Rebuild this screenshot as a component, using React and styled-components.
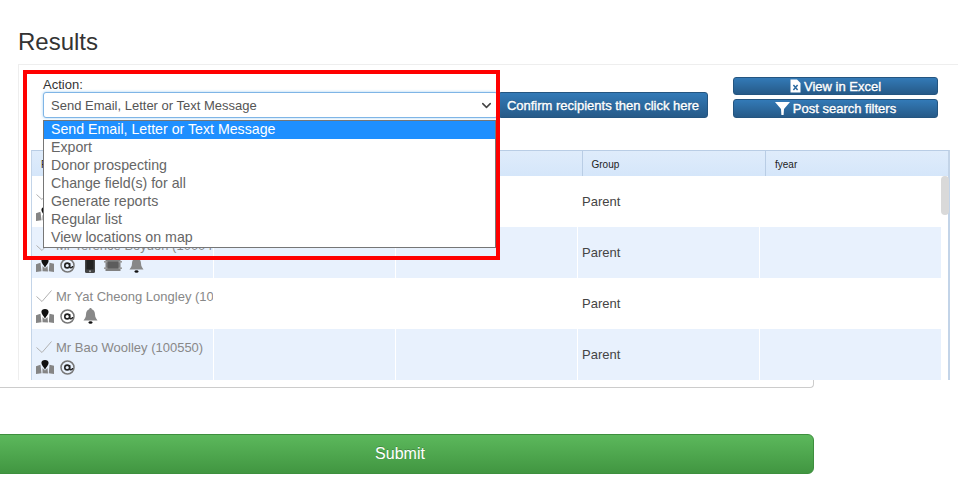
import React from 'react';
import styled, { createGlobalStyle } from 'styled-components';
import { ChevronDown } from 'lucide-react';

const Global = createGlobalStyle`
  html, body { margin: 0; padding: 0; background: #fff; overflow: hidden; }
  body { font-family: "Liberation Sans", Arial, sans-serif; color: #333; }
  * { box-sizing: border-box; }
`;

const Page = styled.div`
  position: relative;
  width: 958px;
  height: 492px;
  overflow: hidden;
`;
const Heading = styled.h1`
  margin: 0;
  height: 64px;
  padding: 28px 0 0 18px;
  font-size: 24px;
  line-height: 27px;
  font-weight: 400;
  color: #333;
`;
const Card = styled.div`
  width: 814px;
  padding-bottom: 7px;
  border-right: 1px solid #ccc;
  border-bottom: 1px solid #ccc;
  border-bottom-right-radius: 4px;
`;
const Panel = styled.section`
  width: 960px;
  height: 316px;
  margin-left: 18px;
  padding-left: 12px;
  background: #fff;
  border-top: 1px solid #eee;
  border-left: 1px solid #eee;
`;
const ActionBar = styled.div`
  display: flex;
  align-items: flex-start;
  height: 85px;
  padding-left: 12px;
`;
const ActionColumn = styled.div`
  width: 455px;
  padding-top: 12px;
`;
const Label = styled.div`
  font-size: 13px;
  line-height: 15px;
  color: #333;
`;
const SelectWrap = styled.div`
  position: relative;
`;
const SelectBox = styled.div`
  display: flex;
  align-items: center;
  justify-content: space-between;
  height: 26px;
  padding: 0 3px 0 7px;
  background: #fff;
  border: 1px solid #7fb5e6;
  border-radius: 3px;
  box-shadow: 0 0 3px rgba(102, 175, 233, .6);
  font-size: 13px;
  color: #555;
`;
const Dropdown = styled.ul`
  position: absolute;
  z-index: 3;
  top: 28px;
  left: 0;
  width: 453px;
  height: 128px;
  margin: 0;
  padding: 0;
  list-style: none;
  background: #fff;
  border: 1px solid #767676;
`;
const Option = styled.li`
  height: 18px;
  padding-left: 7px;
  font-size: 14.2px;
  line-height: 17px;
  color: ${p => (p.$active ? '#fff' : '#666')};
  background: ${p => (p.$active ? '#1e8fff' : 'transparent')};
`;
const BlueButton = styled.button`
  display: flex;
  align-items: center;
  justify-content: center;
  gap: 3px;
  padding: 0;
  width: ${p => p.$w}px;
  height: ${p => p.$h}px;
  font-family: inherit;
  font-size: 13px;
  font-weight: 400;
  white-space: nowrap;
  color: #fff;
  -webkit-text-stroke: 0.35px #fff;
  text-shadow: 0 -1px 0 rgba(0, 0, 0, .2);
  background: linear-gradient(to bottom, #337ab7, #265a88);
  border: 1px solid #245580;
  border-radius: 3px;
`;
const ConfirmSlot = styled.div`
  padding-top: 27px;
`;
const SideButtons = styled.div`
  display: flex;
  flex-direction: column;
  gap: 4px;
  margin-left: 25px;
  padding-top: 12px;
`;
const Table = styled.div`
  width: 919px;
  height: 230px;
  border-left: 1px solid #c3d4e8;
  border-right: 2px solid #c3d4e8;
  border-top: 1px solid #b9cde5;
`;
const HeaderRow = styled.div`
  display: grid;
  grid-template-columns: repeat(5, 183.5px);
  height: 25px;
  background: linear-gradient(to bottom, #dfecfb, #d5e6fa);
`;
const HeaderCell = styled.div`
  padding: 8px 0 0 9px;
  font-size: 10px;
  line-height: 12px;
  color: #222;
  border-right: 1px solid #b9cde5;
  &:last-child { border-right: 0; }
`;
const Body = styled.div`
  display: flex;
  height: 204px;
`;
const Rows = styled.div`
  width: 909px;
`;
const Row = styled.div`
  display: grid;
  grid-template-columns: repeat(5, 181px);
  column-gap: 1px;
  height: 51px;
`;
const Cell = styled.div`
  min-width: 0;
  background: ${p => (p.$alt ? '#e8f1fd' : '#fff')};
`;
const ValueCell = styled(Cell)`
  padding-left: 4px;
  font-size: 13px;
  line-height: 51px;
  color: #444;
`;
const PersonCell = styled(Cell)`
  padding: 10px 0 0 4px;
  overflow: hidden;
`;
const NameLine = styled.div`
  display: flex;
  align-items: center;
  gap: 4px;
  height: 16px;
  font-size: 13px;
  color: #888;
  white-space: nowrap;
`;
const IconLine = styled.div`
  display: flex;
  align-items: center;
  height: 18px;
  margin-top: 3px;
`;
const IconSlot = styled.span`
  display: flex;
  flex: none;
  margin-left: ${p => p.$before || 0}px;
`;
const TickMark = styled.svg`
  flex: none;
`;
const ScrollTrack = styled.div`
  width: 9px;
`;
const ScrollThumb = styled.div`
  width: 8px;
  height: 39px;
  background: #d9d9d9;
  border-radius: 4px;
`;
const SubmitRow = styled.div`
  margin: 46px 0 0 -14px;
`;
const SubmitButton = styled.button`
  display: block;
  width: 828px;
  height: 40px;
  padding: 0;
  font-family: inherit;
  font-size: 16px;
  color: #fff;
  background: linear-gradient(to bottom, #5cb85c, #419641);
  border: 1px solid #3e8f3e;
  border-radius: 6px;
  text-shadow: 0 -1px 0 rgba(0, 0, 0, .2);
`;
const Highlight = styled.div`
  position: absolute;
  z-index: 4;
  left: 23px;
  top: 70px;
  width: 477px;
  height: 190px;
  border: 4px solid #f00;
  pointer-events: none;
`;

const Tick = () => (
  <TickMark width="16" height="12" viewBox="0 0 16 12" fill="none" stroke="#b0b0b0" strokeWidth="1">
    <path d="M0.5 6.5 L6 11.5 L15.5 0.5" />
  </TickMark>
);
const MapPin = () => (
  <svg width="18" height="14" viewBox="0 0 18 16" preserveAspectRatio="none">
    <path d="M0 7 L4.5 5.5 L5.5 15 L0 16 Z M6.5 9 L9 12 L11.5 9 L12 15.5 L6.5 15 Z M13.5 5.5 L18 6.5 L18 16 L12.8 15 Z" fill="#858585" />
    <path d="M9 0 C11.2 0 12.6 1.5 12.6 3.4 C12.6 5.8 10.2 8 9 11 C7.8 8 5.4 5.8 5.4 3.4 C5.4 1.5 6.8 0 9 0 Z" fill="#111" />
  </svg>
);
const AtSign = () => (
  <svg width="15" height="15" viewBox="0 0 15 15" fill="none">
    <circle cx="7.5" cy="7.5" r="6.5" stroke="#777" strokeWidth="1.5" />
    <circle cx="7.2" cy="7.5" r="2.4" stroke="#222" strokeWidth="1.6" />
    <path d="M9.7 5 V8.8 C9.7 10.2 12.5 10.2 12.6 8" stroke="#222" strokeWidth="1.4" />
  </svg>
);
const Phone = () => (
  <svg width="10" height="15" viewBox="0 0 10 15">
    <rect x="0" y="0" width="10" height="15" rx="1.5" fill="#444" />
    <rect x="1.4" y="1.5" width="7.2" height="10" fill="#222" />
    <circle cx="5" cy="13.2" r="1" fill="#aaa" />
  </svg>
);
const Laptop = () => (
  <svg width="18" height="12" viewBox="0 0 18 12">
    <rect x="1.5" y="0" width="15" height="12" fill="#808080" />
    <rect x="0" y="2" width="18" height="1.6" fill="#999" />
    <rect x="0" y="8.4" width="18" height="1.6" fill="#999" />
    <rect x="3.5" y="2.4" width="11" height="7.2" fill="#5c5c5c" />
  </svg>
);
const Bell = () => (
  <svg width="15" height="16" viewBox="0 0 15 16">
    <path d="M7.5 0 C8.3 0 8.8 .6 8.8 1.3 C11 2 12 4 12 6.5 C12 9.5 13.5 11 14.5 12.5 L.5 12.5 C1.5 11 3 9.5 3 6.5 C3 4 4 2 6.2 1.3 C6.2 .6 6.7 0 7.5 0 Z" fill="#888" />
    <ellipse cx="7.5" cy="14.5" rx="2" ry="1.2" fill="#111" />
  </svg>
);
const ExcelIcon = () => (
  <svg width="11" height="14" viewBox="0 0 11 14">
    <path d="M.5 .5 H7 L10.5 4 V13.5 H.5 Z" fill="#fff" />
    <path d="M3.4 6 L7.6 11 M7.6 6 L3.4 11" stroke="#2b6aa1" strokeWidth="1.5" />
  </svg>
);
const FunnelIcon = () => (
  <svg width="15" height="13" viewBox="0 0 15 13">
    <path d="M0 0 H15 L9 7 L8.6 13 H6.4 L6 7 Z" fill="#fff" />
  </svg>
);

const options = [
  'Send Email, Letter or Text Message',
  'Export',
  'Donor prospecting',
  'Change field(s) for all',
  'Generate reports',
  'Regular list',
  'View locations on map',
];

const people = [
  { name: 'Mr Ian Boydon (100021)', icons: [[MapPin, 0], [AtSign, 6], [Bell, 8]] },
  { name: 'Mr Terence Boydon (100041)', icons: [[MapPin, 0], [AtSign, 6], [Phone, 10], [Laptop, 9], [Bell, 7]] },
  { name: 'Mr Yat Cheong Longley (100327)', icons: [[MapPin, 0], [AtSign, 6], [Bell, 8]] },
  { name: 'Mr Bao Woolley (100550)', icons: [[MapPin, 0], [AtSign, 6]] },
];

export default function App() {
  return (
    <Page>
      <Global />
      <Heading>Results</Heading>
      <Card>
        <Panel>
          <ActionBar>
            <ActionColumn>
              <Label>Action:</Label>
              <SelectWrap>
                <SelectBox>
                  <span>Send Email, Letter or Text Message</span>
                  <ChevronDown size={15} color="#444" strokeWidth={2.4} />
                </SelectBox>
                <Dropdown>
                  {options.map((o, i) => (
                    <Option key={o} $active={i === 0}>{o}</Option>
                  ))}
                </Dropdown>
              </SelectWrap>
            </ActionColumn>
            <ConfirmSlot>
              <BlueButton $w={210} $h={26}>Confirm recipients then click here</BlueButton>
            </ConfirmSlot>
            <SideButtons>
              <BlueButton $w={205} $h={18}><ExcelIcon />View in Excel</BlueButton>
              <BlueButton $w={205} $h={19}><FunnelIcon />Post search filters</BlueButton>
            </SideButtons>
          </ActionBar>
          <Table>
            <HeaderRow>
              <HeaderCell>Recipient</HeaderCell>
              <HeaderCell />
              <HeaderCell />
              <HeaderCell>Group</HeaderCell>
              <HeaderCell>fyear</HeaderCell>
            </HeaderRow>
            <Body>
              <Rows>
                {people.map((p, i) => {
                  const alt = i % 2 === 1;
                  return (
                    <Row key={p.name}>
                      <PersonCell $alt={alt}>
                        <NameLine><Tick /><span>{p.name}</span></NameLine>
                        <IconLine>
                          {p.icons.map(([Icon, before], k) => (
                            <IconSlot key={k} $before={before}><Icon /></IconSlot>
                          ))}
                        </IconLine>
                      </PersonCell>
                      <Cell $alt={alt} />
                      <Cell $alt={alt} />
                      <ValueCell $alt={alt}>Parent</ValueCell>
                      <Cell $alt={alt} />
                    </Row>
                  );
                })}
              </Rows>
              <ScrollTrack><ScrollThumb /></ScrollTrack>
            </Body>
          </Table>
        </Panel>
      </Card>
      <SubmitRow>
        <SubmitButton>Submit</SubmitButton>
      </SubmitRow>
      <Highlight />
    </Page>
  );
}
